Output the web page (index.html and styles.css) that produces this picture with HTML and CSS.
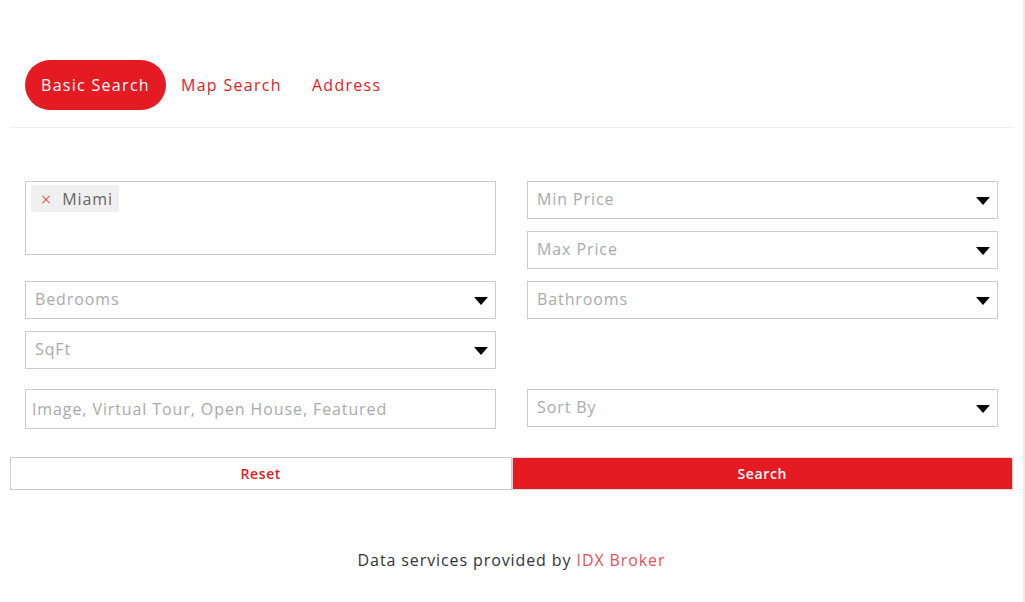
FILE: index.html
```html
<!DOCTYPE html>
<html lang="en">

<head>
  <meta charset="UTF-8">
  <meta name="viewport" content="width=device-width, initial-scale=1.0">
  <title>Property Search</title>
  <link rel="stylesheet" href="styles.css">
</head>

<body>
  <div class="page">
    <nav class="tabs">
      <a class="tab active" href="#">Basic Search</a>
      <a class="tab" href="#">Map Search</a>
      <a class="tab" href="#">Address</a>
    </nav>

    <form class="search-form">
      <div class="fields">
        <div class="location">
          <span class="tag"><span class="tag-remove">×</span>Miami</span>
        </div>
        <div class="stack">
          <div class="select">Min Price</div>
          <div class="select">Max Price</div>
        </div>
        <div class="select">Bedrooms</div>
        <div class="select">Bathrooms</div>
        <div class="select">SqFt</div>
        <div></div>
        <div class="text-input spaced">Image, Virtual Tour, Open House, Featured</div>
        <div class="select spaced">Sort By</div>
      </div>

      <div class="actions">
        <button type="reset" class="btn btn-reset">Reset</button>
        <button type="submit" class="btn btn-search">Search</button>
      </div>
    </form>

    <p class="credit">Data services provided by <a href="#">IDX Broker</a></p>
  </div>
</body>

</html>
```

FILE: styles.css
```css
body {
  margin: 0;
  font-family: "Open Sans", Arial, sans-serif;
  color: #333;
  background: #fff;
  letter-spacing: 0.9px;
}

.page {
  width: 1003px;
  padding: 60px 10px 0;
  border-right: 2px solid #ececec;
  min-height: 542px;
}

.tabs {
  display: flex;
  align-items: center;
  padding: 0 15px 17px;
  border-bottom: 1px solid #eee;
}

.tab {
  display: block;
  height: 50px;
  line-height: 50px;
  padding: 0 15px;
  font-size: 16px;
  font-weight: 500;
  letter-spacing: 1.3px;
  color: #e41b23;
  text-decoration: none;
}

.tab.active {
  padding: 0 16px;
  background-color: #e41b23;
  color: #fff;
  border-radius: 25px;
}

.search-form {
  padding-top: 53px;
}

.fields {
  display: grid;
  grid-template-columns: 471px 471px;
  column-gap: 31px;
  row-gap: 12px;
  padding: 0 15px;
  align-items: start;
}

.location {
  height: 74px;
  border: 1px solid #ccc;
  padding: 3px 5px;
  box-sizing: border-box;
}

.tag {
  display: inline-flex;
  align-items: center;
  height: 27px;
  padding: 0 6px 0 10px;
  background-color: #f0f0f0;
  border-radius: 3px;
  font-size: 16px;
  color: #666;
}

.tag-remove {
  color: #e41b23;
  font-size: 18px;
  font-weight: 300;
  margin-right: 10px;
}

.stack {
  display: flex;
  flex-direction: column;
  gap: 12px;
}

.select,
.text-input {
  position: relative;
  height: 38px;
  line-height: 35px;
  border: 1px solid #ccc;
  box-sizing: border-box;
  padding-left: 9px;
  font-size: 16px;
  color: #aaa;
}

.select::after {
  content: "";
  position: absolute;
  right: 7px;
  top: 15px;
  border-left: 7px solid transparent;
  border-right: 7px solid transparent;
  border-top: 8px solid #000;
}

.text-input {
  height: 40px;
  line-height: 39px;
  padding-left: 6px;
}

.spaced {
  margin-top: 8px;
}

.actions {
  display: flex;
  margin-top: 28px;
}

.btn {
  flex: 1;
  height: 33px;
  font-family: inherit;
  font-size: 14px;
  font-weight: 600;
  letter-spacing: 0.6px;
  border: 1px solid #ccc;
  cursor: pointer;
}

.btn-reset {
  background: #fff;
  color: #e41b23;
}

.btn-search {
  background: #e41b23;
  color: #fff;
  border-color: #ddd;
}

.credit {
  margin: 59px 0 0;
  text-align: center;
  font-size: 16px;
  color: #333;
}

.credit a {
  color: #e8505b;
  text-decoration: none;
}
```
